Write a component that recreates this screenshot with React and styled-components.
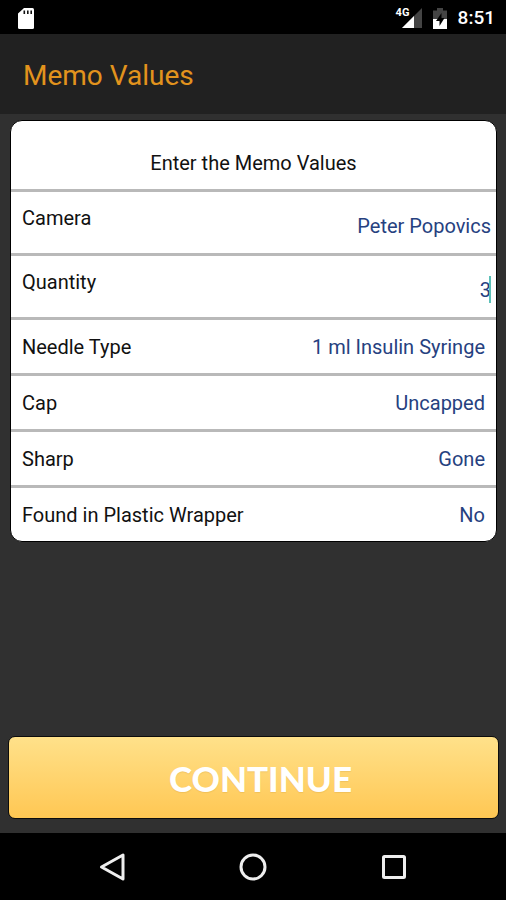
import React, { useState } from 'react';
import styled, { createGlobalStyle } from 'styled-components';

const pickers = [
  { id: 'needle', label: 'Needle Type', options: ['1 ml Insulin Syringe'] },
  { id: 'cap', label: 'Cap', options: ['Uncapped', 'Capped'] },
  { id: 'sharp', label: 'Sharp', options: ['Gone', 'Present'] },
  { id: 'wrapper', label: 'Found in Plastic Wrapper', options: ['No', 'Yes'] },
];

const App = () => {
  const [camera, setCamera] = useState('Peter Popovics');
  const [quantity, setQuantity] = useState('3');

  return (
    <>
      <GlobalStyle />
      <Screen>
        <StatusBar>
          <SdCardIcon />
          <StatusIcons>
            <Signal>
              <SignalIcon />
              <NetworkType>4G</NetworkType>
            </Signal>
            <BatteryIcon />
            <Clock>8:51</Clock>
          </StatusIcons>
        </StatusBar>

        <AppBar>
          <AppTitle>Memo Values</AppTitle>
        </AppBar>

        <Form onSubmit={(e) => e.preventDefault()}>
          <Card>
            <CardTitle>Enter the Memo Values</CardTitle>

            <InputRow>
              <Label htmlFor="camera">Camera</Label>
              <TextInput id="camera" value={camera} onChange={(e) => setCamera(e.target.value)} />
            </InputRow>

            <InputRow>
              <Label htmlFor="quantity">Quantity</Label>
              <CaretField>
                <TextInput
                  id="quantity"
                  inputMode="numeric"
                  value={quantity}
                  onChange={(e) => setQuantity(e.target.value)}
                />
              </CaretField>
            </InputRow>

            {pickers.map(({ id, label, options }) => (
              <Row key={id}>
                <Label htmlFor={id}>{label}</Label>
                <Picker id={id} defaultValue={options[0]}>
                  {options.map((option) => (
                    <option key={option}>{option}</option>
                  ))}
                </Picker>
              </Row>
            ))}
          </Card>

          <ContinueButton type="submit">CONTINUE</ContinueButton>
        </Form>

        <NavBar>
          <NavButton type="button" aria-label="Back">
            <svg width="28" height="30" viewBox="0 0 28 30">
              <path d="M25 3v24L3.500 15z" />
            </svg>
          </NavButton>
          <NavButton type="button" aria-label="Home">
            <svg width="30" height="30" viewBox="0 0 30 30">
              <circle cx="15" cy="15" r="12" />
            </svg>
          </NavButton>
          <NavButton type="button" aria-label="Recent apps">
            <svg width="30" height="30" viewBox="0 0 30 30">
              <rect x="4.500" y="4.500" width="21" height="21" rx="1" />
            </svg>
          </NavButton>
        </NavBar>
      </Screen>
    </>
  );
};

// Icons
const SdCardIcon = () => (
  <svg width="16" height="21" viewBox="0 0 16 21">
    <path d="M6 0h8.500Q16 0 16 1.500v18Q16 21 14.500 21h-13Q0 21 0 19.500V5.500z" fill="#fff" />
    <path d="M6.300 2.500v3.500M9.800 2.500v3.500M13.200 2.500v3.500" stroke="#111" strokeWidth="1.600" />
  </svg>
);

const SignalIcon = () => (
  <svg width="20" height="20" viewBox="0 0 20 20">
    <path d="M20 0v20H0z" fill="#444" />
    <path d="M12 8v12H0z" fill="#fff" />
  </svg>
);

const BatteryIcon = () => (
  <svg width="14" height="21" viewBox="0 0 14 21">
    <path d="M4 0h6v2.500h4V21H0V2.500h4z" fill="#444" />
    <path d="M0 11h14v10H0z" fill="#fff" />
    <path d="M8.500 5L3 13h3.500v5L11.500 10H8.500z" fill="#000" />
  </svg>
);

// Styled components
const GlobalStyle = createGlobalStyle`
  * {
    box-sizing: border-box;
  }

  body {
    margin: 0;
    background: #303030;
    font-family: Roboto, sans-serif;
  }
`;

const Screen = styled.div`
  min-height: 100vh;
  display: flex;
  flex-direction: column;
  background: #303030;
`;

const StatusBar = styled.div`
  height: 34px;
  padding: 2px 11px 0 18px;
  display: flex;
  align-items: center;
  justify-content: space-between;
  background: #000;
`;

const StatusIcons = styled.div`
  display: flex;
  align-items: center;
  gap: 11px;
`;

const Signal = styled.div`
  position: relative;
  display: flex;
`;

const NetworkType = styled.span`
  position: absolute;
  top: -1px;
  left: -6px;
  color: #fff;
  font-size: 11px;
  font-weight: 700;
  line-height: 11px;
`;

const Clock = styled.span`
  color: #fff;
  font-size: 19px;
  font-weight: 500;
  line-height: 24px;
`;

const AppBar = styled.header`
  height: 80px;
  padding: 4px 23px 0;
  display: flex;
  align-items: center;
  background: #212121;
`;

const AppTitle = styled.h1`
  margin: 0;
  color: #e2931d;
  font-size: 28px;
  font-weight: 400;
  line-height: 32px;
`;

const Form = styled.form`
  flex: 1;
  display: flex;
  flex-direction: column;
  justify-content: space-between;
  padding: 6px 7px 14px 8px;
`;

const Card = styled.section`
  margin: 0 2px;
  background: #fff;
  border: 1px solid #000;
  border-radius: 12px;
  color: #111;
  font-size: 20px;
  line-height: 24px;
`;

const CardTitle = styled.h2`
  margin: 0;
  padding: 30px 0 14px;
  font-size: 20px;
  font-weight: 400;
  line-height: 24px;
  text-align: center;
`;

const Row = styled.div`
  min-height: 56px;
  padding: 0 11px;
  display: flex;
  align-items: center;
  justify-content: space-between;
  border-top: 3px solid #b9b9b9;
`;

const InputRow = styled(Row)`
  min-height: 64px;
  padding: 14px 5px 0 11px;
  align-items: flex-start;
`;

const Label = styled.label`
  white-space: nowrap;
`;

const TextInput = styled.input`
  flex: 1;
  min-width: 0;
  width: 100%;
  height: 40px;
  padding: 8px 0;
  border: 0;
  outline: 0;
  background: none;
  color: #26417f;
  caret-color: transparent;
  font: inherit;
  text-align: right;
`;

const CaretField = styled.div`
  position: relative;
  flex: 1;
  display: flex;

  &::after {
    content: '';
    position: absolute;
    top: 6px;
    right: 0;
    width: 2px;
    height: 27px;
    background: #5cc0b8;
  }
`;

const Picker = styled.select`
  appearance: none;
  padding: 0;
  border: 0;
  outline: 0;
  background: none;
  color: #26417f;
  font: inherit;
  text-align: right;
  text-align-last: right;
`;

const ContinueButton = styled.button`
  height: 83px;
  padding: 0 0 0 14px;
  border: 1px solid #0c0c0c;
  border-radius: 7px;
  background: linear-gradient(#ffe18a, #ffc753);
  color: #fff;
  font-family: Lato, sans-serif;
  font-size: 35px;
  font-weight: 900;
  line-height: 40px;
  text-shadow: 0 1px 1px rgba(160, 110, 20, 0.15);
`;

const NavBar = styled.nav`
  height: 67px;
  padding: 0 42px;
  display: flex;
  background: #000;
`;

const NavButton = styled.button`
  flex: 1;
  padding: 0;
  border: 0;
  background: none;
  display: flex;
  align-items: center;
  justify-content: center;

  svg {
    fill: none;
    stroke: #eee;
    stroke-width: 3;
    stroke-linejoin: round;
  }
`;

export default App;
